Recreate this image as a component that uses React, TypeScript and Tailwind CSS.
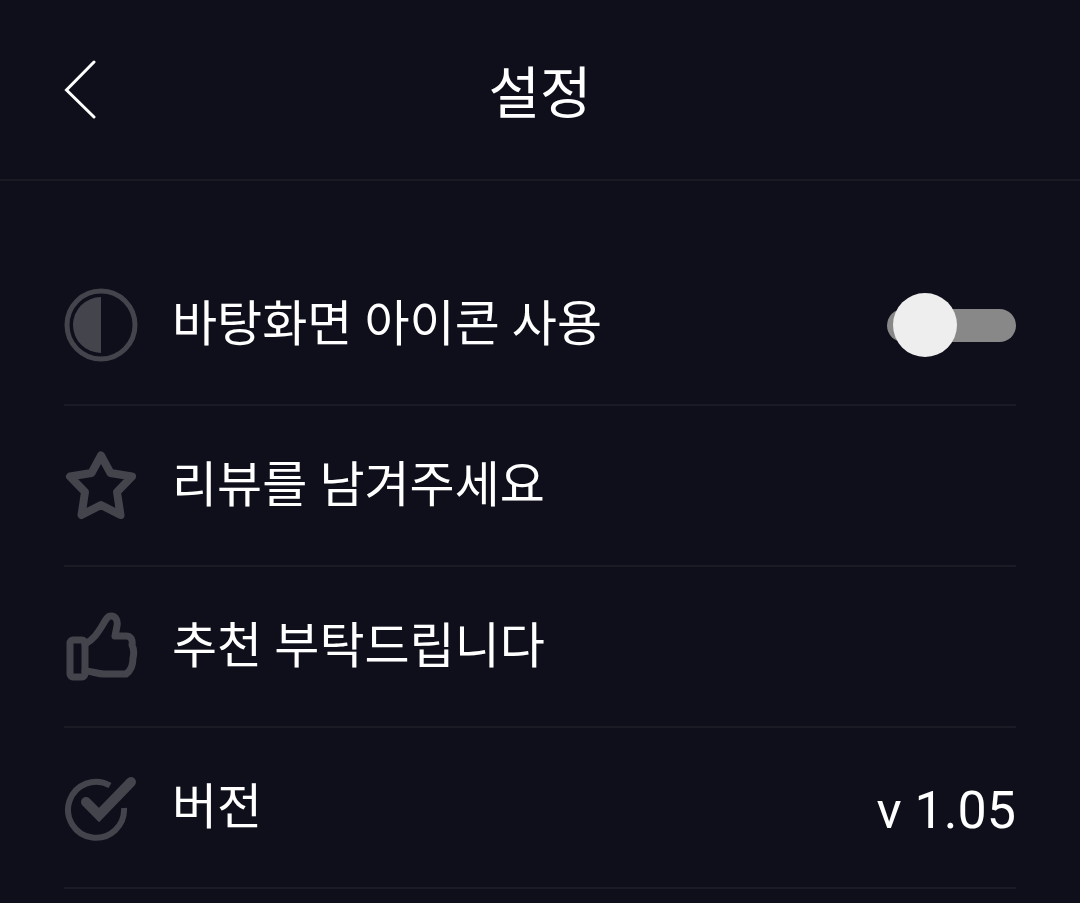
const KR = 'font-["Roboto","Noto_Sans_CJK_KR",sans-serif]';

function ContrastIcon() {
  return (
    <svg width="74" height="74" viewBox="0 0 74 74" fill="none" className="shrink-0">
      <circle cx="37" cy="37" r="34" stroke="#43444c" strokeWidth="5" />
      <path d="M37 9 A28 28 0 0 0 37 65 Z" fill="#43444c" />
    </svg>
  );
}

function StarIcon() {
  return (
    <svg width="74" height="74" viewBox="0 0 74 74" fill="none" className="shrink-0">
      <path
        d="M37 6.5 L46.5 24 L68 27.5 L53 43 L56.5 66 L37 56 L17.5 66 L21 43 L6 27.5 L27.5 24 Z"
        stroke="#43444c"
        strokeWidth="8"
        strokeLinejoin="round"
      />
    </svg>
  );
}

function ThumbIcon() {
  return (
    <svg width="74" height="74" viewBox="0 0 74 74" fill="none" className="shrink-0">
      <rect x="6" y="30" width="15" height="37" rx="3" stroke="#43444c" strokeWidth="7" />
      <path
        d="M21 34 C29 30 33 24 38 16 C41 11 43 6 47 6 C52 6 54 11 53 16 L51 26 L62 26 C67 26 69 30 68 35 C70 39 70 44 69 48 C69 54 68 60 62 64 L40 64 C33 64 28 61 21 61"
        stroke="#43444c"
        strokeWidth="7"
        strokeLinejoin="round"
        strokeLinecap="round"
      />
    </svg>
  );
}

function CheckIcon() {
  return (
    <svg width="74" height="74" viewBox="0 0 74 74" fill="none" className="shrink-0">
      <path d="M46 14.5 A28 28 0 1 0 60 37" stroke="#43444c" strokeWidth="6" strokeLinecap="butt" />
      <path d="M22 31 L35 44 L67 11" stroke="#43444c" strokeWidth="10" strokeLinecap="round" />
    </svg>
  );
}

function Row({ icon, label, children }: { icon: React.ReactNode; label: string; children?: React.ReactNode }) {
  return (
    <div className="h-[161px] flex items-center border-b-2 border-[#1a1b25]">
      {icon}
      <span className="ml-[34px] text-[49px] leading-none text-white">{label}</span>
      <div className="ml-auto">{children}</div>
    </div>
  );
}

export default function App() {
  return (
    <div className={`h-[903px] overflow-hidden bg-[#0e0f1a] ${KR}`}>
      {/* 상단 헤더 */}
      <header className="h-[181px] relative flex items-center justify-center border-b-2 border-[#1a1b25]">
        <button className="absolute left-[64px] top-[60px]">
          <svg width="32" height="60" viewBox="0 0 32 60" fill="none">
            <path d="M30 2 L2.5 30 L30 57" stroke="#ffffff" strokeWidth="3" strokeLinecap="round" />
          </svg>
        </button>
        <h1 className="mt-[8px] text-[56px] leading-none text-white font-normal">설정</h1>
      </header>

      <div className="mt-[64px] px-[64px]">
        <Row icon={<ContrastIcon />} label="바탕화면 아이콘 사용">
          <div className="relative mt-[2px] w-[129px] h-[33px] rounded-full bg-[#888888]">
            <div className="absolute left-[6px] top-[-16px] w-[64px] h-[64px] rounded-full bg-[#eeeeee]" />
          </div>
        </Row>
        <Row icon={<StarIcon />} label="리뷰를 남겨주세요" />
        <Row icon={<ThumbIcon />} label="추천 부탁드립니다" />
        <Row icon={<CheckIcon />} label="버전">
          <span className="block mt-[6px] text-[52px] leading-none text-white">v 1.05</span>
        </Row>
      </div>
    </div>
  );
}
